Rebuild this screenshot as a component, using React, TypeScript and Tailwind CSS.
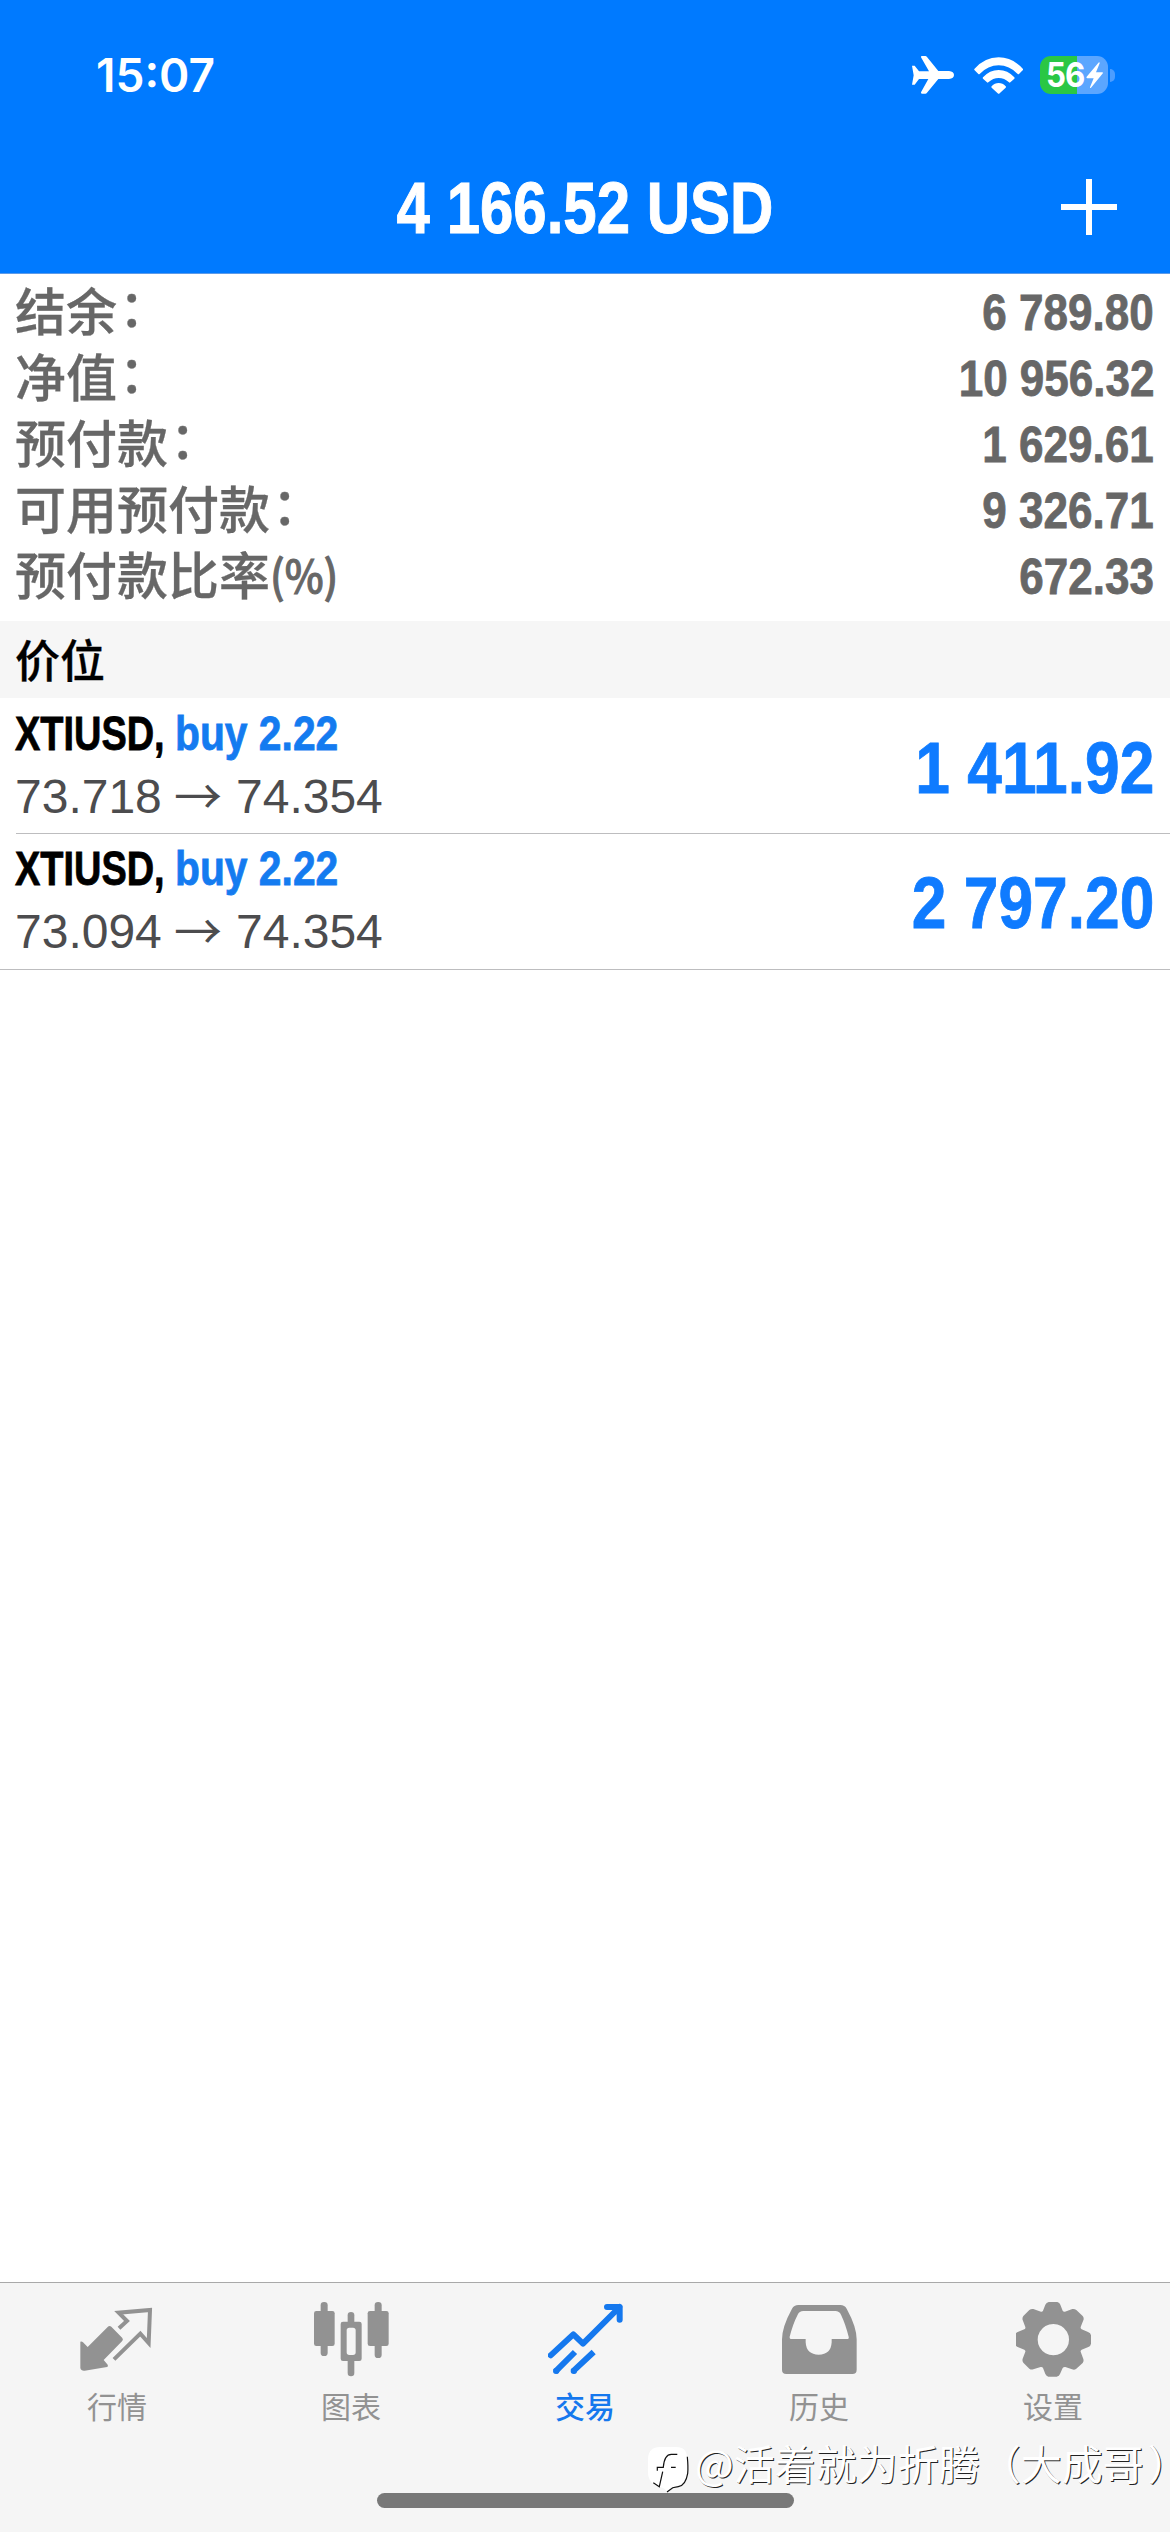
import clsx from "clsx";
import type { ReactNode } from "react";

const summary = [
  { label: "结余", unit: "：", value: "6 789.80" },
  { label: "净值", unit: "：", value: "10 956.32" },
  { label: "预付款", unit: "：", value: "1 629.61" },
  { label: "可用预付款", unit: "：", value: "9 326.71" },
  { label: "预付款比率", unit: "(%)", value: "672.33" },
];

const positions = [
  { symbol: "XTIUSD", side: "buy 2.22", open: "73.718", current: "74.354", profit: "1 411.92" },
  { symbol: "XTIUSD", side: "buy 2.22", open: "73.094", current: "74.354", profit: "2 797.20" },
];

const sans = "font-['Liberation_Sans','Noto_Sans_CJK_SC',sans-serif]";
const cjk = "font-['Noto_Sans_CJK_SC',sans-serif]";

function StatusBar() {
  return (
    <div className="flex h-[150px] items-center justify-between pl-[96px] pr-[55px]">
      <span className="font-['Inter',sans-serif] text-[46px] font-semibold leading-none">15:07</span>
      <div className="flex items-center">
        <svg className="h-[38px] w-[42px]" viewBox="36 46 126 114" fill="currentColor">
          <path d="M36 75h8l13 17h30L63 50q-1-4 3-4h10q3 0 5 3l34 42h32q15 2 15 12t-15 12h-32l-34 41q-2 3-5 3H66q-4 0-3-4l22-40H57l-13 17h-8l5-28z" />
        </svg>
        <svg className="ml-5 h-[37px] w-[49px]" viewBox="220 44 147 111" fill="currentColor">
          <path d="M221 80q31-35 73-35t73 35q1 2-1 4l-11 11q-2 2-4 0-25-26-57-26t-57 26q-2 2-4 0l-11-11q-2-2-1-4z" />
          <path d="M247 105q20-22 47-22t47 22q2 2 0 4l-12 11q-2 2-4 0-14-13-31-13t-31 13q-2 2-4 0l-12-11q-2-2 0-4z" />
          <path d="M273 132q9-10 21-10t21 10q2 2 0 4l-18 17q-3 3-6 0l-18-17q-2-2 0-4z" />
        </svg>
        <div className="ml-[17px] flex h-[38px] w-[68px] items-center rounded-[11px] bg-linear-to-r from-[#2ac744] from-54% to-[#5ba6ff] to-54% pl-[6px]">
          <span className="w-[40px] origin-left scale-x-[.92] font-['Inter',sans-serif] text-[34px] font-bold leading-none tracking-[-1px]">
            56
          </span>
          <svg className="h-[27px] w-[18px]" viewBox="560 66 54 80" fill="currentColor">
            <path d="M598 67l-36 43q-2 4 2 4h19l-11 27q-1 4 3 2l35-43q3-4-2-4h-18l11-27q0-5-3-2z" />
          </svg>
        </div>
        <div className="ml-0.5 h-[13px] w-[5px] rounded-r-full bg-[#4c9dff]" />
      </div>
    </div>
  );
}

function Header() {
  return (
    <header className="h-[274px] border-b border-[#5d9be8] bg-[#007aff] text-white">
      <StatusBar />
      <div className="grid h-[114px] grid-cols-[120px_1fr_120px] items-center">
        <span />
        <h1 className="origin-center scale-x-[.833] whitespace-nowrap pt-px text-center text-[72px] font-bold leading-none [-webkit-text-stroke:1px_currentColor]">
          4 166.52 USD
        </h1>
        <svg className="ml-[11px] size-[56px]" viewBox="0 0 56 56" stroke="currentColor" strokeWidth="6">
          <path d="M0 28h56M28 0v56" />
        </svg>
      </div>
    </header>
  );
}

type SummaryRowProps = {
  label: string;
  unit: string;
  value: string;
};

function SummaryRow({ label, unit, value }: SummaryRowProps) {
  return (
    <div className="flex h-[66px] items-center justify-between">
      <span
        className={clsx(
          cjk,
          "-ml-px flex items-center pb-[5px] text-[51px] font-medium leading-none [-webkit-text-stroke:.3px_currentColor]",
        )}
      >
        {label}
        {unit === "：" ? (
          <span className="-mt-1 mb-1 ml-[2px]">{unit}</span>
        ) : (
          <span className="origin-left scale-x-[.92] text-[45px] leading-none [-webkit-text-stroke:1px_currentColor]">
            {unit}
          </span>
        )}
      </span>
      <span className="origin-right scale-x-[.88] pt-0.5 text-[50px] font-bold leading-none [-webkit-text-stroke:.8px_currentColor]">
        {value}
      </span>
    </div>
  );
}

type Position = (typeof positions)[number];

function PositionRow({ position, last }: { position: Position; last: boolean }) {
  return (
    <div className={clsx("h-[136px] border-b border-[#bdbdbf]", last ? "pb-0.5 pl-4" : "ml-4")}>
      <div className="flex h-full items-center justify-between pr-4">
        <div className="-ml-px flex flex-col gap-[15px]">
          <div className="flex whitespace-nowrap text-[48px] font-bold leading-none [-webkit-text-stroke:.8px_currentColor]">
            <span className="w-[160px] origin-left scale-x-[.79] text-black">{position.symbol},</span>
            <span className="origin-left scale-x-[.85] text-[#147bf0]">{position.side}</span>
          </div>
          <div className="flex text-[48px] leading-none text-[#4c4c4e]">
            <span className="w-[159px]">{position.open}</span>
            <span className={clsx(cjk, "-mt-1 mb-1 w-[62px] leading-none")}>→</span>
            <span>{position.current}</span>
          </div>
        </div>
        <span className="origin-right scale-x-[.865] pt-1 text-[72px] font-bold leading-none text-[#0f7bff] [-webkit-text-stroke:.8px_currentColor]">
          {position.profit}
        </span>
      </div>
    </div>
  );
}

function Tab({ label, active, children }: { label: string; active?: boolean; children: ReactNode }) {
  return (
    <div className={clsx("flex flex-1 flex-col items-center pt-[19px]", active ? "text-[#1578ee]" : "text-[#929292]")}>
      {children}
      <span className={clsx(cjk, "mt-[13px] text-[30px] leading-none", active && "font-medium")}>{label}</span>
    </div>
  );
}

function TabBar() {
  return (
    <nav className="flex h-[250px] border-t border-[#a9a9a9] bg-[#f5f5f5]">
      <Tab label="行情">
        <svg className="size-[75px]" viewBox="239 96 225 225" fill="none">
          <path
            fill="currentColor"
            d="M240 215q5-1 8 2l14 14 60-60q5-6 11-1l33 34q4 5-1 10l-55 56 12 14q3 5-2 7l-67 11q-11 1-13-8z"
          />
          <path stroke="currentColor" strokeWidth="12" strokeLinejoin="miter" d="M356 175l24-22-25-25 94-8-4 99-25-28-79 77" />
        </svg>
      </Tab>
      <Tab label="图表">
        <svg className="size-[75px]" viewBox="940 96 225 225" fill="currentColor">
          <rect x="960" y="96" width="21" height="162" rx="10" />
          <rect x="940" y="123" width="62" height="105" rx="7" />
          <rect x="1041" y="126" width="20" height="40" rx="10" />
          <rect x="1041" y="262" width="20" height="57" rx="10" />
          <path fillRule="evenodd" d="M1027 155h49q7 0 7 7v104q0 7-7 7h-49q-7 0-7-7V162q0-7 7-7zM1046 173q-8 0-8 8v66q0 8 8 8h11q8 0 8-8v-66q0-8-8-8z" />
          <rect x="1122" y="96" width="21" height="168" rx="10" />
          <rect x="1101" y="123" width="63" height="105" rx="7" />
        </svg>
      </Tab>
      <Tab label="交易" active>
        <svg className="size-[75px]" viewBox="382 96 225 225" fill="none" stroke="currentColor" strokeWidth="18" strokeLinejoin="round">
          <path strokeLinecap="round" d="M390 256l68-63 29 28L597 111M559 111h38v38" />
          <path d="M404 305l59-59M456 305l63-59" />
          <path strokeLinecap="round" d="M406 303h1M459 303h1" />
        </svg>
      </Tab>
      <Tab label="历史">
        <svg className="size-[75px]" viewBox="94 96 225 225" fill="currentColor">
          <path
            fillRule="evenodd"
            d="M143 105h126q13 0 19 11 30 55 30 92v91q0 13-13 13H107q-13 0-13-13v-91q0-37 30-92 6-11 19-11zM158 123q-12 0-17 11-14 27-24 66-1 7 6 7h42v10q2 37 39 37t39-37v-10h46q7 0 5-7-10-39-23-66-5-11-17-11z"
          />
        </svg>
      </Tab>
      <Tab label="设置">
        <svg className="size-[75px]" viewBox="796 96 225 225" fill="currentColor">
          <path
            fillRule="evenodd"
            d="M895 96h25q7 2 9 8l7 18q2 4 7 3l22-8q7-1 12 3l19 18q5 6 2 13l-8 20q-1 4 3 7l19 8q8 3 9 10v25q-1 7-8 10l-20 8q-4 2-3 6l8 22q2 7-2 12l-19 17q-6 5-13 2l-20-7q-5-1-8 3l-8 18q-2 7-10 8h-25q-6-1-9-8l-7-18q-2-4-7-3l-22 7q-7 2-12-2l-18-18q-4-5-2-12l8-21q1-4-3-6l-20-8q-7-3-8-10v-25q1-7 8-10l20-8q4-2 3-7l-8-21q-2-6 2-12l18-18q5-4 12-3l23 8q4 1 6-3l7-18q3-6 10-8zM908 162a47 47 0 1 0 .1 0z"
          />
        </svg>
      </Tab>
    </nav>
  );
}

function Watermark() {
  return (
    <div className="absolute left-[648px] top-[2444px] flex items-start text-white">
      <svg className="h-[50px] w-[42px]" viewBox="0 0 42 50">
        <path fill="#fff" d="M12 3h16q11 0 11 11v14q0 13-12 15-4 0-8 5-2-4-7-5Q0 40 0 28V14Q1 3 12 3z" />
        <path
          fill="none"
          stroke="#111"
          strokeWidth="1.2"
          d="M39.3 12.7q1 10 .4 16.6-2 12-9.4 13.4l-5.6 1L19 48M5.3 38.7l6 4 3.4-15M9.3 26.7v-3.4h6q1-13 8-13h6M23 23.3h4.7"
        />
      </svg>
      <span
        className={clsx(cjk, "-mt-0.5 ml-[5px] whitespace-nowrap text-[41px] leading-none [text-shadow:1px_1px_0_#222]")}
      >
        @活着就为折腾（大成哥
        <span className="ml-[4px] [font-feature-settings:'halt']">）</span>
      </span>
    </div>
  );
}

export default function App() {
  return (
    <div className={clsx(sans, "relative flex h-[2532px] w-[1170px] flex-col overflow-hidden bg-white")}>
      <Header />
      <section className="h-[347px] px-4 pt-[5px] text-[#676767]">
        {summary.map((row) => (
          <SummaryRow key={row.label} {...row} />
        ))}
      </section>
      <h2
        className={clsx(
          cjk,
          "flex h-[77px] items-center bg-[#f6f6f6] pb-[3px] pl-[15px] text-[45px] font-medium leading-none text-black [-webkit-text-stroke:.3px_currentColor]",
        )}
      >
        价位
      </h2>
      <main className="flex-1">
        {positions.map((position, i) => (
          <PositionRow key={position.open} position={position} last={i === positions.length - 1} />
        ))}
      </main>
      <TabBar />
      <div className="absolute bottom-[24px] left-[377px] h-[15px] w-[417px] rounded-full bg-[#787878]" />
      <Watermark />
    </div>
  );
}
